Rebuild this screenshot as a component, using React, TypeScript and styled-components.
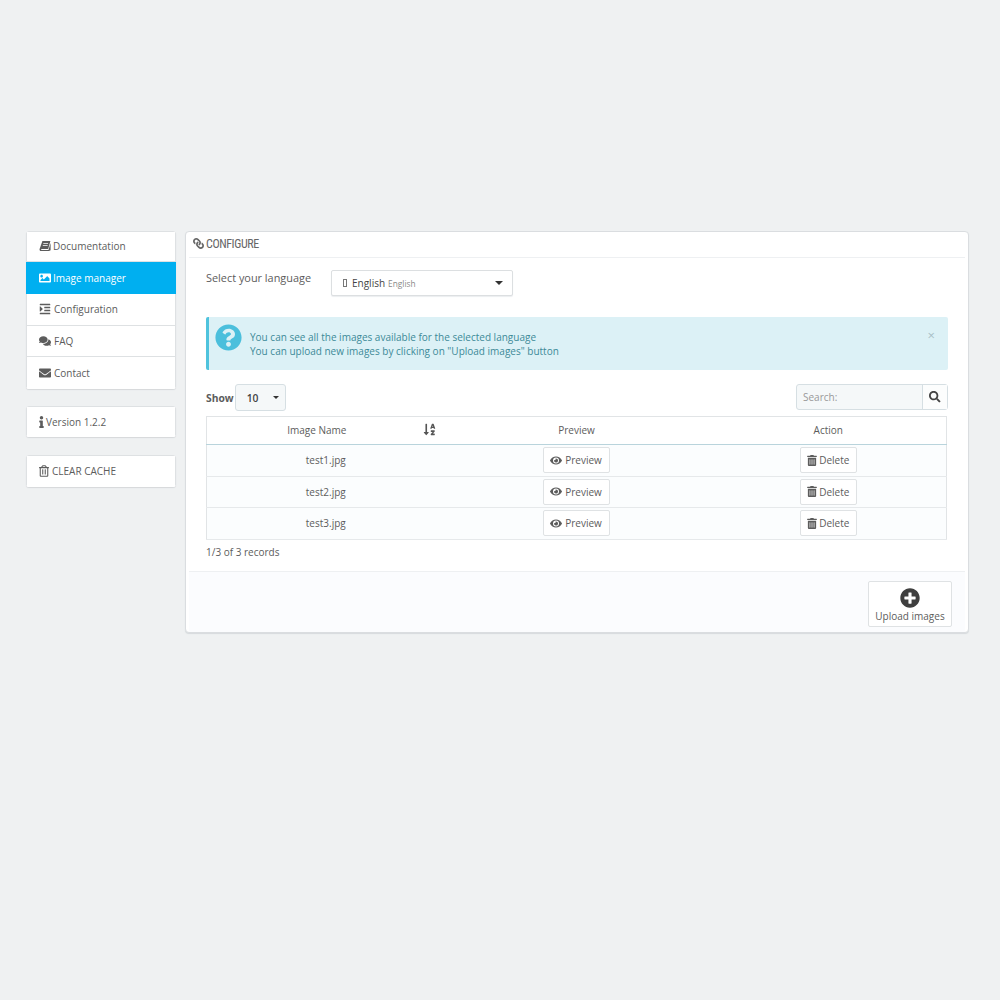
import styled, { createGlobalStyle } from "styled-components";
import {
  FaComments,
  FaEnvelope,
  FaEye,
  FaImage,
  FaIndent,
  FaInfo,
  FaLink,
  FaPlusCircle,
  FaQuestionCircle,
  FaRegTrashAlt,
  FaSearch,
  FaSortAlphaDown,
  FaTrashAlt,
} from "react-icons/fa";

const GlobalStyle = createGlobalStyle`
  html, body {
    margin: 0;
    padding: 0;
    background: #eff1f2;
  }

  body {
    font-family: "Open Sans", "Liberation Sans", sans-serif;
    font-size: 10px;
    color: #5c5c5c;
  }
`;

const Page = styled.div`
  width: 1000px;
  height: 1000px;
  box-sizing: border-box;
  padding: 231px 31px 0 26px;
  display: flex;
  align-items: flex-start;
  gap: 9px;
`;

const Sidebar = styled.aside`
  width: 150px;
  flex: none;
  display: flex;
  flex-direction: column;
  gap: 17.5px;
`;

const Card = styled.div`
  background: #fff;
  border-radius: 3px;
  box-shadow: 0 1px 1px #d5d8da;
  overflow: hidden;
`;

const MenuItem = styled.div<{ $active?: boolean; $h?: number; $iconW?: number; $gap?: number }>`
  height: ${(p) => p.$h ?? 31.5}px;
  box-sizing: border-box;
  padding-left: 12px;
  display: flex;
  align-items: center;
  gap: ${(p) => p.$gap ?? 3}px;
  background: ${(p) => (p.$active ? "#00aff0" : "#fff")};
  color: ${(p) => (p.$active ? "#fff" : "#5c5c5c")};
  border: solid ${(p) => (p.$active ? "#00aff0" : "#dee1e3")};
  border-width: 0 1px 1px;

  &:first-child {
    border-top-width: 1px;
    padding-bottom: 1px;
  }

  &:last-child {
    border-bottom-width: 0;
  }

  svg {
    width: ${(p) => p.$iconW ?? 12}px;
    height: 12px;
    flex: none;
  }
`;

const Panel = styled.section`
  width: 784px;
  height: 402px;
  box-sizing: border-box;
  flex: none;
  display: flex;
  flex-direction: column;
  background: #fff;
  border: 1px solid #dadde0;
  border-radius: 4px;
  box-shadow: 0 1px 1px #d6dadd;
  overflow: hidden;
`;

const PanelHeader = styled.header`
  height: 26px;
  margin: 0 3px;
  padding: 0 0 2px 4px;
  box-sizing: border-box;
  display: flex;
  align-items: center;
  gap: 2px;
  border-bottom: 1px solid #eef0f2;
  font-family: "Liberation Sans Narrow", "Roboto Condensed", "Liberation Sans", sans-serif;
  font-size: 12px;
  letter-spacing: -0.4px;
  color: #666;

  svg {
    font-size: 11px;
    transform: scaleX(-1);
  }
`;

const PanelBody = styled.div`
  flex: 1;
  padding: 12px 20px 0;
  display: flex;
  flex-direction: column;
`;

const LanguageRow = styled.div`
  display: flex;
  align-items: flex-start;
  height: 47px;
`;

const LanguageLabel = styled.label`
  width: 125px;
  font-size: 10.9px;
  line-height: 16px;
`;

const LanguageSelect = styled.div`
  width: 182px;
  height: 26px;
  box-sizing: border-box;
  padding: 0 9px 0 11px;
  display: flex;
  align-items: center;
  gap: 3px;
  background: #fff;
  border: 1px solid #dcdfe1;
  border-radius: 2px;
  box-shadow: 0 1px 1px #eceef0;
  color: #444;

  small {
    font-size: 8.3px;
    color: #888;
  }
`;

const MissingGlyph = styled.span`
  width: 2px;
  height: 6px;
  margin-right: 2px;
  border: 1px solid #777;
`;

const Caret = styled.span<{ $size?: number }>`
  margin-left: auto;
  width: 0;
  height: 0;
  border-left: ${(p) => p.$size ?? 4}px solid transparent;
  border-right: ${(p) => p.$size ?? 4}px solid transparent;
  border-top: ${(p) => p.$size ?? 4}px solid #333;
`;

const Alert = styled.div`
  position: relative;
  height: 53px;
  box-sizing: border-box;
  padding-left: 6px;
  display: flex;
  align-items: center;
  gap: 8px;
  background: #dcf1f6;
  border-left: 3px solid #4fc3dd;
  border-radius: 2px;
  color: #3c8a98;
  line-height: 14px;

  svg {
    color: #4bbfdc;
    font-size: 27px;
    flex: none;
    margin-top: -13px;
  }
`;

const AlertClose = styled.span`
  position: absolute;
  right: 13px;
  top: 11px;
  font-size: 13px;
  color: #a8bfc6;
`;

const Controls = styled.div`
  margin-top: 14px;
  height: 27px;
  display: flex;
  align-items: flex-start;
  justify-content: space-between;
`;

const ShowGroup = styled.div`
  display: flex;
  align-items: center;
  gap: 1px;
  font-size: 10.3px;
  font-weight: 700;
`;

const ShowSelect = styled.div`
  width: 51px;
  height: 27px;
  box-sizing: border-box;
  padding: 0 6px 0 11px;
  display: flex;
  align-items: center;
  background: #f5f8f9;
  border: 1px solid #d6dfe3;
  border-radius: 3px;
  color: #444;
  font-weight: 600;
`;

const SearchGroup = styled.div`
  width: 152px;
  height: 26px;
  box-sizing: border-box;
  display: flex;
  background: #f5f8f9;
  border: 1px solid #d6dfe3;
  border-radius: 3px;
`;

const SearchField = styled.span`
  flex: 1;
  padding-left: 6px;
  line-height: 24px;
  color: #999;
`;

const SearchButton = styled.span`
  width: 24px;
  display: flex;
  align-items: center;
  justify-content: center;
  border-left: 1px solid #d6dfe3;
  background: #fcfdfd;
  color: #444;
  font-size: 11.5px;
`;

const Table = styled.table`
  margin-top: 5px;
  width: 741px;
  table-layout: fixed;
  border-collapse: collapse;
  border: 1px solid #e1e4e6;
  border-bottom-color: #d4d8da;
  text-align: center;
`;

const HeadCell = styled.th<{ $w: number; $pad?: string }>`
  position: relative;
  width: ${(p) => p.$w}px;
  height: 28px;
  padding: ${(p) => p.$pad ?? "0 0 2px"};
  box-sizing: border-box;
  border-bottom: 1px solid #b9d4dc;
  font-weight: 400;

  svg {
    position: absolute;
    right: 9px;
    top: 6px;
    font-size: 13px;
    color: #555;
  }
`;

const Row = styled.tr`
  background: #fbfdfe;
  border-bottom: 1px solid #e6e9eb;
`;

const Cell = styled.td<{ $shift?: number }>`
  height: 31.5px;
  padding: 0 0 0 ${(p) => p.$shift ?? 0}px;
  box-sizing: border-box;
`;

const ActionButton = styled.span<{ $iconW: number; $gap: number }>`
  display: inline-flex;
  align-items: center;
  gap: ${(p) => p.$gap}px;
  height: 26px;
  box-sizing: border-box;
  padding: 0 7px 0 6px;
  background: #fff;
  border: 1px solid #dfe2e4;
  border-radius: 2px;
  vertical-align: middle;

  svg {
    width: ${(p) => p.$iconW}px;
    height: 11px;
  }
`;

const Records = styled.p`
  margin: 4px 0 0;
  line-height: 16px;
`;

const PanelFooter = styled.footer`
  height: 61px;
  box-sizing: border-box;
  margin: 0 3px;
  padding: 9px 13px 0 0;
  display: flex;
  justify-content: flex-end;
  align-items: flex-start;
  border-top: 1px solid #eef0f2;
  background: #fbfcfe;
`;

const UploadButton = styled.span`
  width: 84px;
  height: 46px;
  box-sizing: border-box;
  padding-top: 6px;
  display: flex;
  flex-direction: column;
  align-items: center;
  gap: 1px;
  background: #fff;
  border: 1px solid #dfe2e4;
  border-radius: 2px;
  color: #5c5c5c;

  svg {
    font-size: 20px;
    color: #3f3f3f;
    flex: none;
  }
`;

// slanted book, Font Awesome 3 style, not in the FA5 set
function BookIcon(): JSX.Element {
  return (
    <svg viewBox="0 0 12 12" fill="currentColor">
      <path d="M3.4 1H11.4L9.2 9H2.6C2 9 1.9 9.9 2.5 9.9H9.5L11.6 3V10.2L10 11H2.2C.9 11 .3 10 .6 8.9Z" />
      <path d="M4.4 3H9.2L9 3.7H4.2ZM3.9 5H8.7L8.5 5.7H3.7Z" fill="#fff" />
    </svg>
  );
}

const files = ["test1.jpg", "test2.jpg", "test3.jpg"];

export default function App(): JSX.Element {
  return (
    <Page>
      <GlobalStyle />
      <Sidebar>
        <Card>
          <MenuItem $h={31} $gap={2}>
            <BookIcon />
            Documentation
          </MenuItem>
          <MenuItem $active $h={32} $gap={2}>
            <FaImage />
            Image manager
          </MenuItem>
          <MenuItem>
            <FaIndent />
            Configuration
          </MenuItem>
          <MenuItem>
            <FaComments />
            FAQ
          </MenuItem>
          <MenuItem>
            <FaEnvelope />
            Contact
          </MenuItem>
        </Card>
        <Card>
          <MenuItem $h={31} $iconW={5} $gap={2}>
            <FaInfo />
            Version 1.2.2
          </MenuItem>
        </Card>
        <Card>
          <MenuItem $h={32} $iconW={10}>
            <FaRegTrashAlt />
            CLEAR CACHE
          </MenuItem>
        </Card>
      </Sidebar>

      <Panel>
        <PanelHeader>
          <FaLink />
          CONFIGURE
        </PanelHeader>
        <PanelBody>
          <LanguageRow>
            <LanguageLabel>Select your language</LanguageLabel>
            <LanguageSelect>
              <MissingGlyph />
              English <small>English</small>
              <Caret />
            </LanguageSelect>
          </LanguageRow>

          <Alert>
            <FaQuestionCircle />
            <div>
              You can see all the images available for the selected language
              <br />
              You can upload new images by clicking on "Upload images" button
            </div>
            <AlertClose>×</AlertClose>
          </Alert>

          <Controls>
            <ShowGroup>
              Show
              <ShowSelect>
                10
                <Caret $size={3} />
              </ShowSelect>
            </ShowGroup>
            <SearchGroup>
              <SearchField>Search:</SearchField>
              <SearchButton>
                <FaSearch />
              </SearchButton>
            </SearchGroup>
          </Controls>

          <Table>
            <thead>
              <tr>
                <HeadCell $w={238} $pad="0 18px 2px 0">
                  Image Name
                  <FaSortAlphaDown />
                </HeadCell>
                <HeadCell $w={264}>Preview</HeadCell>
                <HeadCell $w={238} $pad="0 0 2px 2px">
                  Action
                </HeadCell>
              </tr>
            </thead>
            <tbody>
              {files.map((file) => (
                <Row key={file}>
                  <Cell>{file}</Cell>
                  <Cell>
                    <ActionButton $iconW={12} $gap={3}>
                      <FaEye />
                      Preview
                    </ActionButton>
                  </Cell>
                  <Cell $shift={3}>
                    <ActionButton $iconW={10} $gap={2}>
                      <FaTrashAlt />
                      Delete
                    </ActionButton>
                  </Cell>
                </Row>
              ))}
            </tbody>
          </Table>
          <Records>1/3 of 3 records</Records>
        </PanelBody>
        <PanelFooter>
          <UploadButton>
            <FaPlusCircle />
            Upload images
          </UploadButton>
        </PanelFooter>
      </Panel>
    </Page>
  );
}
